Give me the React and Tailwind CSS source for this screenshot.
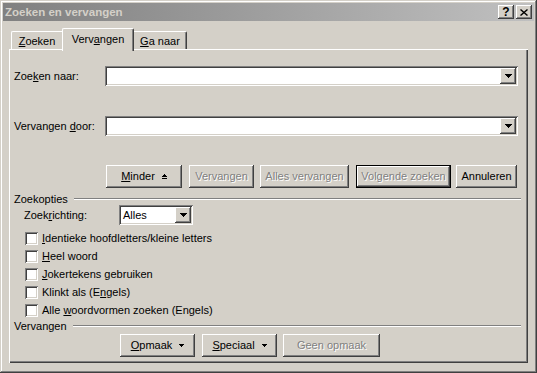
import React from "react";

const raised =
  "bg-[#d4d0c8] shadow-[inset_-1px_-1px_#404040,inset_1px_1px_#ffffff,inset_-2px_-2px_#808080,inset_2px_2px_#d4d0c8]";
const sunken =
  "bg-white shadow-[inset_1px_1px_#808080,inset_-1px_-1px_#ffffff,inset_2px_2px_#404040,inset_-2px_-2px_#d4d0c8]";
const disabled = "text-[#808080] [text-shadow:1px_1px_0_#ffffff]";

function U({ children }) {
  return <span className="underline decoration-1 underline-offset-[1px]">{children}</span>;
}

function DownArrow() {
  return (
    <svg width="7" height="4" viewBox="0 0 7 4" className="block">
      <path d="M0 0H7L3.5 4Z" fill="#000" shapeRendering="crispEdges" />
    </svg>
  );
}

function SmallDown() {
  return (
    <svg width="5" height="3" viewBox="0 0 5 3" className="block">
      <path d="M0 0H5L2.5 3Z" fill="#000" shapeRendering="crispEdges" />
    </svg>
  );
}

function DropBtn() {
  return (
    <div className={`w-[16px] h-[16px] flex items-center justify-center ${raised}`}>
      <DownArrow />
    </div>
  );
}

function Combo({ w, children }) {
  return (
    <div className={`${w} h-[20px] p-[2px] flex items-stretch ${sunken}`}>
      <div className="flex-1 pl-[1px] flex items-center">{children}</div>
      <DropBtn />
    </div>
  );
}

function Btn({ w, children, dis, def, className = "" }) {
  const inner = (
    <div
      className={`h-full w-full flex items-center justify-center gap-[7px] ${raised} ${
        dis ? disabled : ""
      }`}
    >
      {children}
    </div>
  );
  if (def) {
    return <div className={`${w} h-[23px] border border-black ${className}`}>{inner}</div>;
  }
  return <div className={`${w} h-[23px] ${className}`}>{inner}</div>;
}

function Check({ children }) {
  return (
    <div className="h-[18px] flex items-center pl-[11px]">
      <div className={`w-[13px] h-[13px] ${sunken}`} />
      <span className="ml-[4px]">{children}</span>
    </div>
  );
}

function Group({ children, className = "" }) {
  return (
    <div className={`flex items-center h-[12px] ${className}`}>
      <span>{children}</span>
      <div className="flex-1 ml-[6px] mr-[7px] h-[2px] border-t border-t-[#808080] border-b border-b-white" />
    </div>
  );
}

export default function App() {
  return (
    <div className="w-[537px] h-[373px] bg-[#d4d0c8] p-[3px] font-['Liberation_Sans',Arial,sans-serif] text-[11px] leading-[13px] text-black shadow-[inset_-1px_-1px_#404040,inset_1px_1px_#d4d0c8,inset_-2px_-2px_#808080,inset_2px_2px_#ffffff] overflow-hidden">
      {/* Title bar */}
      <div className="h-[18px] flex items-center bg-linear-to-r from-[#808080] to-[#c0c0c0] pl-[2px] pr-[2px]">
        <span className="font-bold text-[#d4d0c8] text-[11.5px] leading-[13px]">Zoeken en vervangen</span>
        <div className="ml-auto flex gap-[2px]">
          <div className={`w-[16px] h-[14px] flex items-center justify-center font-bold text-[12px] leading-[12px] ${raised}`}>
            ?
          </div>
          <div className={`w-[16px] h-[14px] flex items-center justify-center ${raised}`}>
            <svg width="8" height="7" viewBox="0 0 8 7" className="block">
              <path d="M0.5 0.5L7.5 6.5M7.5 0.5L0.5 6.5" stroke="#000" strokeWidth="1.4" />
            </svg>
          </div>
        </div>
      </div>

      <div className="pt-[7px] px-[6px]">
        {/* Tabs */}
        <div className="flex items-end pl-[2px] h-[21px] relative z-10">
          <div className="w-[51px] h-[18px] border-l border-t border-white rounded-tl-[2px] flex items-center justify-center pt-[2px]">
            <span>
              <U>Z</U>oeken
            </span>
          </div>
          <div className="w-[72px] h-[23px] mb-[-2px] bg-[#d4d0c8] border-l border-t border-white border-r border-r-[#404040] rounded-t-[2px] shadow-[inset_-1px_0_#808080] flex items-start justify-center pt-[4px]">
            <span>
              Verv<U>a</U>ngen
            </span>
          </div>
          <div className="w-[53px] h-[18px] border-t border-white border-r border-r-[#404040] rounded-tr-[2px] shadow-[inset_-1px_0_#808080] flex items-center justify-center pt-[2px]">
            <span>
              <U>G</U>a naar
            </span>
          </div>
        </div>

        {/* Panel */}
        <div className="h-[314px] shadow-[inset_1px_1px_#ffffff,inset_-1px_-1px_#404040,inset_-2px_-2px_#808080] pl-[5px] pt-[17px]">
          <div className="flex items-center h-[20px]">
            <span className="w-[91px]">
              Zoe<U>k</U>en naar:
            </span>
            <Combo w="w-[413px]" />
          </div>
          <div className="flex items-center h-[20px] mt-[30px]">
            <span className="w-[91px]">
              Vervangen <U>d</U>oor:
            </span>
            <Combo w="w-[413px]" />
          </div>

          <div className="flex mt-[29px] ml-[92px]">
            <Btn w="w-[76px]">
              <span>
                <U>M</U>inder
              </span>
              <svg width="5" height="5" viewBox="0 0 5 5" className="block">
                <path d="M2.5 0L5 3H0Z" fill="#000" shapeRendering="crispEdges" />
                <rect x="0" y="4" width="5" height="1" fill="#000" />
              </svg>
            </Btn>
            <Btn w="w-[65px]" dis className="ml-[7px]">
              Vervangen
            </Btn>
            <Btn w="w-[89px]" dis className="ml-[6px]">
              Alles vervangen
            </Btn>
            <Btn w="w-[95px]" dis def className="ml-[7px]">
              Volgende zoeken
            </Btn>
            <Btn w="w-[61px]" className="ml-[5px]">
              Annuleren
            </Btn>
          </div>

          <Group className="mt-[5px]">Zoekopties</Group>

          <div className="flex items-center h-[20px]">
            <span className="ml-[10px] w-[95px]">
              Zoek<U>r</U>ichting:
            </span>
            <Combo w="w-[74px]">
              <span className="pl-[1px]">Alles</span>
            </Combo>
          </div>

          <div className="mt-[4px]">
            <Check>
              <U>I</U>dentieke hoofdletters/kleine letters
            </Check>
            <Check>
              <U>H</U>eel woord
            </Check>
            <Check>
              <U>J</U>okertekens gebruiken
            </Check>
            <Check>
              Klinkt als (E<U>n</U>gels)
            </Check>
            <Check>
              Alle <U>w</U>oordvormen zoeken (Engels)
            </Check>
          </div>

          <Group className="mt-[1px]">Vervangen</Group>

          <div className="flex mt-[2px] ml-[106px]">
            <Btn w="w-[75px]">
              <span>
                <U>O</U>pmaak
              </span>
              <SmallDown />
            </Btn>
            <Btn w="w-[75px]" className="ml-[7px]">
              <span>
                <U>S</U>peciaal
              </span>
              <SmallDown />
            </Btn>
            <Btn w="w-[97px]" dis className="ml-[6px]">
              Geen opmaak
            </Btn>
          </div>
        </div>
      </div>
    </div>
  );
}
